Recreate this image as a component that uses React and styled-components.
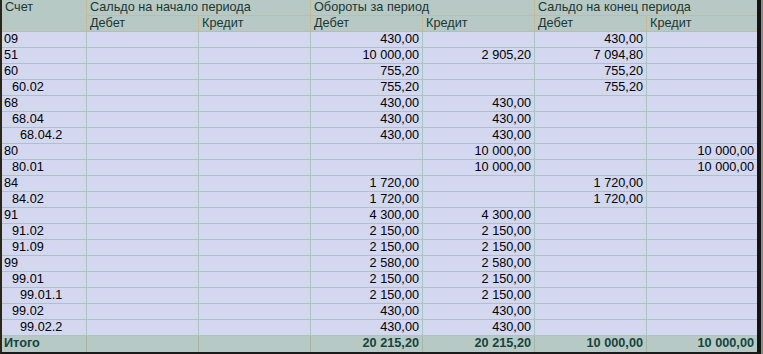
import { Fragment } from "react";
import styled, { createGlobalStyle, css } from "styled-components";

const GlobalStyle = createGlobalStyle`
  html, body {
    margin: 0;
    padding: 0;
    background: #8a8a86;
  }
  body {
    font-family: "Liberation Sans", Arial, sans-serif;
    font-size: 12.7px;
  }
`;

const Frame = styled.div`
  width: 755px;
  border-left: 2px solid #2b2618;
  border-right: 4px solid #141414;
  border-bottom: 2px solid #1a1a1a;
  background: #d3d7ef;
`;

const Grid = styled.div`
  display: grid;
  grid-template-columns: 85px 112px 112px 112px 112px 112px 110px;
  grid-auto-rows: 16px;
`;

const cellBase = css`
  box-sizing: border-box;
  padding: 0 3px;
  line-height: 15px;
  white-space: nowrap;
  overflow: hidden;
  border-right: ${(p) => (p.$last ? "none" : "1px solid")};
  border-bottom: 1px solid;
`;

const HeadCell = styled.div`
  ${cellBase};
  grid-column: span ${(p) => p.$span || 1};
  grid-row: span ${(p) => p.$rows || 1};
  background: #b6c9c4;
  border-color: #c8bb93;
  color: #1c3634;
`;

const Cell = styled.div`
  ${cellBase};
  border-color: #a9c7b8;
  color: #000;
  text-align: ${(p) => (p.$num ? "right" : "left")};
  padding-left: ${(p) => 2 + (p.$level || 0) * 8}px;
`;

const TotalCell = styled.div`
  ${cellBase};
  border-bottom: none;
  border-color: #a7b5a2;
  background: #b6c9c4;
  color: #17443e;
  font-weight: bold;
  text-align: ${(p) => (p.$num ? "right" : "left")};
  padding-left: 2px;
`;

const rows = [
  ["09", 0, "", "", "430,00", "", "430,00", ""],
  ["51", 0, "", "", "10 000,00", "2 905,20", "7 094,80", ""],
  ["60", 0, "", "", "755,20", "", "755,20", ""],
  ["60.02", 1, "", "", "755,20", "", "755,20", ""],
  ["68", 0, "", "", "430,00", "430,00", "", ""],
  ["68.04", 1, "", "", "430,00", "430,00", "", ""],
  ["68.04.2", 2, "", "", "430,00", "430,00", "", ""],
  ["80", 0, "", "", "", "10 000,00", "", "10 000,00"],
  ["80.01", 1, "", "", "", "10 000,00", "", "10 000,00"],
  ["84", 0, "", "", "1 720,00", "", "1 720,00", ""],
  ["84.02", 1, "", "", "1 720,00", "", "1 720,00", ""],
  ["91", 0, "", "", "4 300,00", "4 300,00", "", ""],
  ["91.02", 1, "", "", "2 150,00", "2 150,00", "", ""],
  ["91.09", 1, "", "", "2 150,00", "2 150,00", "", ""],
  ["99", 0, "", "", "2 580,00", "2 580,00", "", ""],
  ["99.01", 1, "", "", "2 150,00", "2 150,00", "", ""],
  ["99.01.1", 2, "", "", "2 150,00", "2 150,00", "", ""],
  ["99.02", 1, "", "", "430,00", "430,00", "", ""],
  ["99.02.2", 2, "", "", "430,00", "430,00", "", ""],
];

const totals = ["", "", "20 215,20", "20 215,20", "10 000,00", "10 000,00"];

const App = () => {
  return (
    <>
      <GlobalStyle />
      <Frame>
        <Grid>
          <HeadCell $rows={2}>Счет</HeadCell>
          <HeadCell $span={2}>Сальдо на начало периода</HeadCell>
          <HeadCell $span={2}>Обороты за период</HeadCell>
          <HeadCell $span={2} $last>
            Сальдо на конец периода
          </HeadCell>
          <HeadCell>Дебет</HeadCell>
          <HeadCell>Кредит</HeadCell>
          <HeadCell>Дебет</HeadCell>
          <HeadCell>Кредит</HeadCell>
          <HeadCell>Дебет</HeadCell>
          <HeadCell $last>Кредит</HeadCell>

          {rows.map(([account, level, ...values]) => (
            <Fragment key={account}>
              <Cell $level={level}>{account}</Cell>
              {values.map((v, i) => (
                <Cell key={i} $num $last={i === values.length - 1}>
                  {v}
                </Cell>
              ))}
            </Fragment>
          ))}

          <TotalCell>Итого</TotalCell>
          {totals.map((v, i) => (
            <TotalCell key={"t" + i} $num $last={i === totals.length - 1}>
              {v}
            </TotalCell>
          ))}
        </Grid>
      </Frame>
    </>
  );
};

export default App;
